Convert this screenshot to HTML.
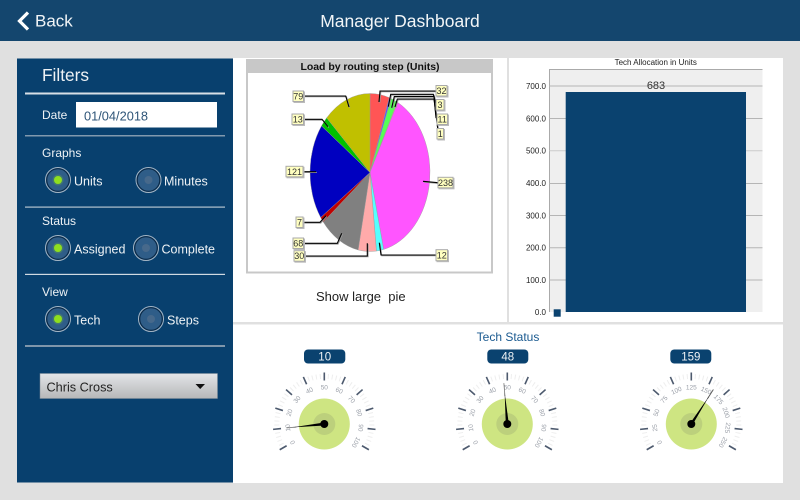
<!DOCTYPE html>
<html><head><meta charset="utf-8"><title>Manager Dashboard</title>
<style>
html,body{margin:0;padding:0;background:#e0e0e0}
svg{display:block;font-family:"Liberation Sans",sans-serif;filter:blur(.3px)}
.w{fill:#eef2f5;font-size:12.5px}
.l{fill:#333;font-size:9px;text-anchor:middle}
.b{fill:#222;font-size:8px;text-anchor:end}
.g{fill:#9a9fa8;font-size:6.5px;text-anchor:middle}
.t{stroke:#4d5a6e;stroke-width:1.6}
.p{fill:#eef2f5;font-size:11.5px;text-anchor:middle}
</style></head><body>
<svg width="800" height="500" viewBox="0 0 800 500" xmlns="http://www.w3.org/2000/svg">
<defs>
<g id="radioOn"><circle r="12.5" fill="#2f5d88" stroke="#a3b5c5" stroke-width="1"/><circle r="11.3" fill="none" stroke="#0a2a48" stroke-width="1.2"/><circle r="5.5" fill="#8fe022" opacity=".2"/><circle r="4" fill="#8fdf1e"/></g>
<g id="radioOff"><circle r="12.5" fill="#2f5d88" stroke="#a3b5c5" stroke-width="1"/><circle r="11.3" fill="none" stroke="#0a2a48" stroke-width="1.2"/><circle r="4" fill="#47698b"/></g>
<g id="dial">
<circle r="25.5" fill="#cee582"/><circle r="11" fill="#bcd07c"/>
<path d="M-41.1 23.75A47.5 47.5 0 1 1 41.1 23.75" pathLength="240" fill="none" stroke="#eeeeee" stroke-width="5" stroke-dasharray="1.2 3.6" stroke-dashoffset=".6"/>
<g class="t">
<line y1="-43.5" y2="-51.5" transform="rotate(-120)"/><line y1="-43.5" y2="-51.5" transform="rotate(-96)"/><line y1="-43.5" y2="-51.5" transform="rotate(-72)"/><line y1="-43.5" y2="-51.5" transform="rotate(-48)"/><line y1="-43.5" y2="-51.5" transform="rotate(-24)"/><line y1="-43.5" y2="-51.5"/><line y1="-43.5" y2="-51.5" transform="rotate(24)"/><line y1="-43.5" y2="-51.5" transform="rotate(48)"/><line y1="-43.5" y2="-51.5" transform="rotate(72)"/><line y1="-43.5" y2="-51.5" transform="rotate(96)"/><line y1="-43.5" y2="-51.5" transform="rotate(120)"/>
</g>
</g>
</defs>

<rect width="800" height="500" fill="#e0e0e0"/>
<rect width="800" height="41" fill="#14466e"/>
<path d="M28 12.5L19.5 21L28 29.5" fill="none" stroke="#fff" stroke-width="3.2"/>
<text x="35" y="26.5" fill="#f2f5f7" font-size="17">Back</text>
<text x="400" y="27" fill="#f2f5f7" font-size="17.5" text-anchor="middle">Manager Dashboard</text>

<!-- panels -->
<rect x="233" y="58" width="274" height="264" fill="#fff"/>
<rect x="509" y="58" width="274" height="264" fill="#fff"/>
<rect x="233" y="324.5" width="550" height="158.5" fill="#fff"/>

<!-- sidebar -->
<rect x="17" y="58.5" width="216" height="424" fill="#08406e"/>
<text x="42" y="81" fill="#eef2f5" font-size="17.3">Filters</text>
<rect x="25" y="92.5" width="200" height="2" fill="#d8dfe6"/>
<text class="w" x="42" y="119" style="font-size:12px">Date</text>
<rect x="76" y="102" width="141" height="25.5" fill="#fff"/>
<text x="84" y="120.5" fill="#2f5578" font-size="12.8">01/04/2018</text>
<rect x="25" y="135" width="200" height="1.5" fill="#8199ae"/>
<text class="w" x="42" y="157" style="font-size:12px">Graphs</text>
<use href="#radioOn" x="58" y="180"/><text class="w" x="74" y="185.5">Units</text>
<use href="#radioOff" x="148.5" y="180"/><text class="w" x="164" y="185.5">Minutes</text>
<rect x="25" y="206.5" width="200" height="1.2" fill="#b4c3d0"/>
<text class="w" x="42" y="225" style="font-size:12px">Status</text>
<use href="#radioOn" x="58" y="248"/><text class="w" x="74" y="253.3">Assigned</text>
<use href="#radioOff" x="146" y="248"/><text class="w" x="161.5" y="253.3">Complete</text>
<rect x="25" y="273.8" width="200" height="1.2" fill="#d0dae2"/>
<text class="w" x="42" y="296" style="font-size:12px">View</text>
<use href="#radioOn" x="58" y="319"/><text class="w" x="74" y="324.3">Tech</text>
<use href="#radioOff" x="151" y="319"/><text class="w" x="167" y="324.3">Steps</text>
<rect x="25" y="345" width="200" height="2" fill="#7f96ab"/>
<linearGradient id="dd" x1="0" y1="0" x2="0" y2="1"><stop offset="0" stop-color="#e3e5e8"/><stop offset="1" stop-color="#b6b7b8"/></linearGradient>
<rect x="40" y="373.5" width="177.5" height="25" fill="url(#dd)" stroke="#7d8a96" stroke-width=".5"/>
<text x="46.5" y="391.7" fill="#222" font-size="12.7">Chris Cross</text>
<path d="M195.5 384H205L200.2 389Z" fill="#111"/>

<!-- pie frame -->
<rect x="247" y="60" width="245" height="212.5" fill="#fff" stroke="#c8c8c8" stroke-width="2"/>
<rect x="246" y="59" width="247" height="14" fill="#c8c8c8"/>
<text x="370" y="70" font-size="10.5" font-weight="bold" fill="#111" text-anchor="middle" textLength="139">Load by routing step (Units)</text>

<!-- pie -->
<g transform="translate(370 172.5)" stroke="#999" stroke-width=".4">
<path d="M0 0L0 -79A60 79 0 0 1 19.27 -74.82Z" fill="#ff5555"/>
<path d="M0 0L19.27 -74.82A60 79 0 0 1 21 -74Z" fill="#5555ff"/>
<path d="M0 0L21 -74A60 79 0 0 1 27.17 -70.44Z" fill="#55ff55"/>
<path d="M0 0L27.17 -70.44A60 79 0 0 1 27.71 -70.07Z" fill="#ffff55"/>
<path d="M0 0L27.71 -70.07A60 79 0 0 1 13.67 76.92Z" fill="#ff55ff"/>
<path d="M0 0L13.67 76.92A60 79 0 0 1 6.43 78.54Z" fill="#55ffff"/>
<path d="M0 0L6.43 78.54A60 79 0 0 1 -11.87 77.44Z" fill="#ffaaaa"/>
<path d="M0 0L-11.87 77.44A60 79 0 0 1 -46.76 49.5Z" fill="#808080"/>
<path d="M0 0L-46.76 49.5A60 79 0 0 1 -49.34 44.95Z" fill="#c00000"/>
<path d="M0 0L-49.34 44.95A60 79 0 0 1 -48.44 -46.62Z" fill="#0000c0"/>
<path d="M0 0L-48.44 -46.62A60 79 0 0 1 -43.34 -54.63Z" fill="#00c000"/>
<path d="M0 0L-43.34 -54.63A60 79 0 0 1 0 -79Z" fill="#c0c000"/>
</g>

<!-- leaders -->
<g fill="none" stroke="#999" stroke-width="1" transform="translate(.8 .8)">
<path d="M379 102L380 91H436"/><path d="M388.3 106.7L390.7 94.3H433.3L436 104"/><path d="M391.7 107.7L394.3 96.5H434L436 118"/><path d="M395 107L397.3 99H434L438 131"/>
<path d="M303 96H345.7L349 107"/><path d="M303 119.3H322L328 126.7"/><path d="M303 171.7H316"/><path d="M438 182.7L423 181.3"/><path d="M303 222.3H320L326 215.7"/><path d="M303 243.3H337.3L341.7 233.3"/><path d="M304 256H367.3V243.3"/><path d="M436 255H381L379.3 242.7"/>
</g>
<g fill="none" stroke="#000" stroke-width="1.1">
<path d="M379 102L380 91H436"/><path d="M388.3 106.7L390.7 94.3H433.3L436 104"/><path d="M391.7 107.7L394.3 96.5H434L436 118"/><path d="M395 107L397.3 99H434L438 131"/>
<path d="M303 96H345.7L349 107"/><path d="M303 119.3H322L328 126.7"/><path d="M303 171.7H316"/><path d="M438 182.7L423 181.3"/><path d="M303 222.3H320L326 215.7"/><path d="M303 243.3H337.3L341.7 233.3"/><path d="M304 256H367.3V243.3"/><path d="M436 255H381L379.3 242.7"/>
</g>

<!-- pie labels -->
<g fill="#ffffc0" stroke="#aaa" stroke-width="1" style="filter:drop-shadow(1px 1px 0 #bbb)">
<rect x="436" y="85.5" width="11" height="10.5"/><rect x="436" y="99.5" width="8" height="10.5"/><rect x="437" y="114" width="10.5" height="10.5"/><rect x="437" y="128.5" width="6.5" height="10.5"/>
<rect x="293" y="91" width="10.5" height="10.5"/><rect x="292" y="114" width="11.5" height="10.5"/><rect x="286" y="166.3" width="17" height="10.5"/><rect x="438" y="177.3" width="15" height="10.5"/>
<rect x="296" y="217" width="7" height="10.5"/><rect x="293" y="238" width="10.5" height="10.5"/><rect x="294" y="250.7" width="10.5" height="10.5"/><rect x="436" y="249.7" width="11.5" height="11"/>
</g>
<g>
<text class="l" x="441.5" y="94">32</text><text class="l" x="440" y="108">3</text><text class="l" x="442.2" y="122.5">11</text><text class="l" x="440.2" y="137">1</text>
<text class="l" x="298.2" y="99.5">79</text><text class="l" x="297.7" y="122.5">13</text><text class="l" x="294.5" y="174.8">121</text><text class="l" x="445.5" y="185.8">238</text>
<text class="l" x="299.5" y="225.5">7</text><text class="l" x="298.2" y="246.5">68</text><text class="l" x="299.2" y="259.2">30</text><text class="l" x="441.7" y="258.4">12</text>
</g>
<text x="316" y="301" fill="#222" font-size="13" xml:space="preserve">Show large&#160; pie</text>

<!-- bar chart -->
<text x="655.7" y="65" fill="#222" font-size="8" text-anchor="middle">Tech Allocation in Units</text>
<rect x="549.5" y="69.5" width="213" height="242.5" fill="#efefef"/>
<path d="M549.5 312V69.5H762.5" fill="none" stroke="#aaa" stroke-width="1"/>
<g stroke="#b5b5b5" stroke-width="1">
<line x1="549.5" x2="762.5" y1="86" y2="86"/><line x1="549.5" x2="762.5" y1="118.5" y2="118.5"/><line x1="549.5" x2="762.5" y1="150.7" y2="150.7" stroke="#ccc"/><line x1="549.5" x2="762.5" y1="183.5" y2="183.5"/><line x1="549.5" x2="762.5" y1="215.5" y2="215.5"/><line x1="549.5" x2="762.5" y1="247.7" y2="247.7"/><line x1="549.5" x2="762.5" y1="280" y2="280"/>
</g>
<rect x="565.7" y="92" width="180.3" height="220" fill="#0a426f"/>
<text x="656" y="89" fill="#333" font-size="11" text-anchor="middle">683</text>
<text class="b" x="546" y="89">700.0</text><text class="b" x="546" y="121.3">600.0</text><text class="b" x="546" y="153.7">500.0</text><text class="b" x="546" y="186">400.0</text><text class="b" x="546" y="218.3">300.0</text><text class="b" x="546" y="250.7">200.0</text><text class="b" x="546" y="283">100.0</text><text class="b" x="546" y="315">0.0</text>
<rect x="553.7" y="309.3" width="7" height="7.4" fill="#0a426f"/>

<!-- gauges -->
<text x="508" y="341" fill="#1a5a90" font-size="12" text-anchor="middle">Tech Status</text>

<rect x="304" y="349.5" width="41.3" height="14" rx="4" fill="#0a426f"/><text class="p" x="324.7" y="360.7">10</text>
<rect x="487.3" y="349.5" width="41" height="14" rx="4" fill="#0a426f"/><text class="p" x="507.8" y="360.7">48</text>
<rect x="670.3" y="349.5" width="41" height="14" rx="4" fill="#0a426f"/><text class="p" x="690.8" y="360.7">159</text>

<g transform="translate(324.3 424)">
<use href="#dial"/>
<text class="g" transform="rotate(-120) translate(0 -34.5)">0</text><text class="g" transform="rotate(-96) translate(0 -34.5)">10</text><text class="g" transform="rotate(-72) translate(0 -34.5)">20</text><text class="g" transform="rotate(-48) translate(0 -34.5)">30</text><text class="g" transform="rotate(-24) translate(0 -34.5)">40</text><text class="g" transform="translate(0 -34.5)">50</text><text class="g" transform="rotate(24) translate(0 -34.5)">60</text><text class="g" transform="rotate(48) translate(0 -34.5)">70</text><text class="g" transform="rotate(72) translate(0 -34.5)">80</text><text class="g" transform="rotate(96) translate(0 -34.5)">90</text><text class="g" transform="rotate(120) translate(0 -34.5)">100</text>
<g transform="rotate(-96)"><line y1="-28" y2="-38" stroke="#777" stroke-width=".8"/><path d="M-1.5 0L0 -32L1.5 0Z" fill="#000"/></g>
<circle r="4" fill="#000"/>
</g>

<g transform="translate(507.3 424)">
<use href="#dial"/>
<text class="g" transform="rotate(-120) translate(0 -34.5)">0</text><text class="g" transform="rotate(-96) translate(0 -34.5)">10</text><text class="g" transform="rotate(-72) translate(0 -34.5)">20</text><text class="g" transform="rotate(-48) translate(0 -34.5)">30</text><text class="g" transform="rotate(-24) translate(0 -34.5)">40</text><text class="g" transform="translate(0 -34.5)">50</text><text class="g" transform="rotate(24) translate(0 -34.5)">60</text><text class="g" transform="rotate(48) translate(0 -34.5)">70</text><text class="g" transform="rotate(72) translate(0 -34.5)">80</text><text class="g" transform="rotate(96) translate(0 -34.5)">90</text><text class="g" transform="rotate(120) translate(0 -34.5)">100</text>
<g transform="rotate(-4.8)"><line y1="-28" y2="-41" stroke="#777" stroke-width=".8"/><path d="M-1.5 0L0 -32L1.5 0Z" fill="#000"/></g>
<circle r="4" fill="#000"/>
</g>

<g transform="translate(691.3 424)">
<use href="#dial"/>
<text class="g" transform="rotate(-120) translate(0 -34.5)">0</text><text class="g" transform="rotate(-96) translate(0 -34.5)">25</text><text class="g" transform="rotate(-72) translate(0 -34.5)">50</text><text class="g" transform="rotate(-48) translate(0 -34.5)">75</text><text class="g" transform="rotate(-24) translate(0 -34.5)">100</text><text class="g" transform="translate(0 -34.5)">125</text><text class="g" transform="rotate(24) translate(0 -34.5)">150</text><text class="g" transform="rotate(48) translate(0 -34.5)">175</text><text class="g" transform="rotate(72) translate(0 -34.5)">200</text><text class="g" transform="rotate(96) translate(0 -34.5)">225</text><text class="g" transform="rotate(120) translate(0 -34.5)">250</text>
<g transform="rotate(32.6)"><line y1="-30" y2="-41" stroke="#555" stroke-width=".9"/><path d="M-1.4 0L0 -34L1.4 0Z" fill="#000"/></g>
<circle r="4" fill="#000"/>
</g>
</svg>
</body></html>
